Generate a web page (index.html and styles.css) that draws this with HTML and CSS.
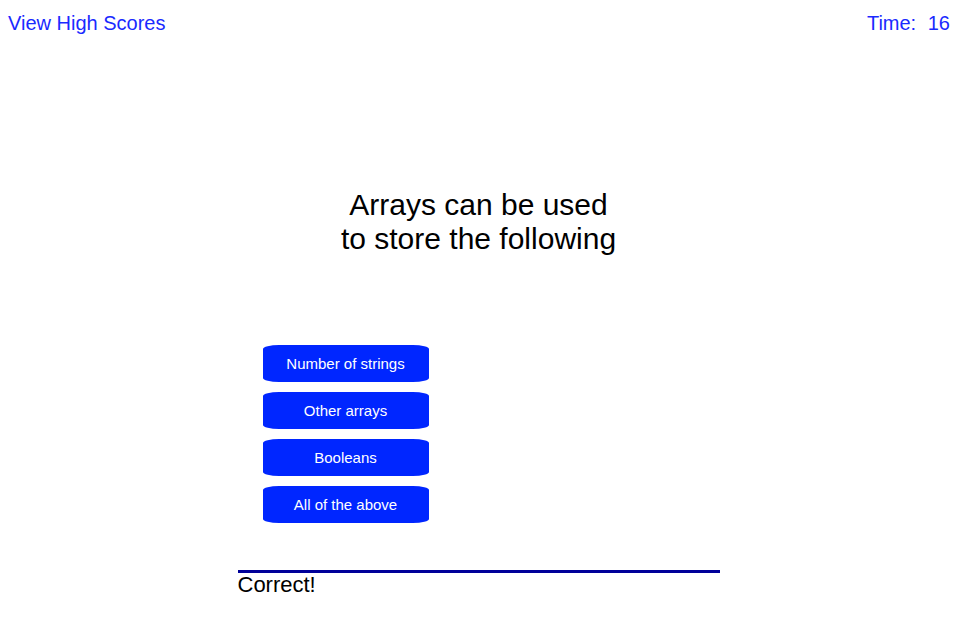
FILE: index.html
```html
<!DOCTYPE html>
<html>
<head>
<meta charset="utf-8">
<link rel="stylesheet" href="styles.css">
</head>
<body>
<header class="top">
  <a class="scores" href="#">View High Scores</a>
  <span class="timer">Time: <span class="count">16</span></span>
</header>
<div class="wrap">
<main class="quiz">
  <h1 class="question">Arrays can be used<br>to store the following</h1>
  <div class="choices">
    <button class="choice">Number of strings</button>
    <button class="choice">Other arrays</button>
    <button class="choice">Booleans</button>
    <button class="choice">All of the above</button>
  </div>
  <div class="result">Correct!</div>
</main>
</div>
</body>
</html>
```
FILE: styles.css
```css
html, body {
  margin: 0;
  padding: 0;
  background: #fff;
  font-family: "Liberation Sans", Arial, sans-serif;
}
.top {
  display: flex;
  justify-content: space-between;
  padding: 12px 5px 0 8px;
  font-size: 20px;
  line-height: 23px;
}
.scores, .timer {
  color: #1a2aff;
  text-decoration: none;
}
.count {
  margin-left: 6px;
}
.wrap {
  padding-left: 2px;
}
.quiz {
  width: 482px;
  margin: 0 auto;
}
.question {
  margin: 153px 0 0;
  text-align: center;
  font-weight: normal;
  font-size: 30px;
  line-height: 34px;
  color: #000;
}
.choices {
  display: flex;
  flex-direction: column;
  align-items: flex-start;
  gap: 10px;
  margin: 89px 0 0 25px;
}
.choice {
  width: 166px;
  height: 37px;
  border: none;
  border-radius: 16px / 4px;
  background: #0026ff;
  color: #fff;
  font-family: "Liberation Sans", Arial, sans-serif;
  font-size: 15px;
  padding: 0;
}
.result {
  margin-top: 47px;
  border-top: 3px solid #000099;
  padding-top: 0;
  font-size: 22px;
  line-height: 23px;
  color: #000;
}
```
